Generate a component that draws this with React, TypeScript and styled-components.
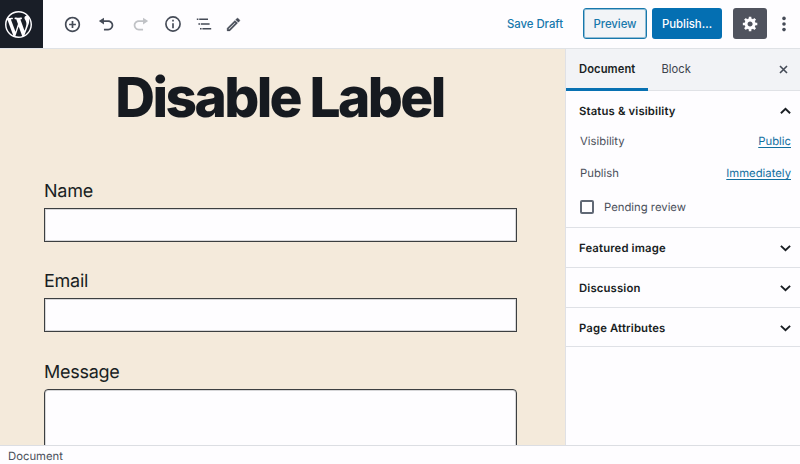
import React from 'react';
import styled, { createGlobalStyle, css } from 'styled-components';

const GlobalStyle = createGlobalStyle`
  *, *::before, *::after { box-sizing: border-box; }
  body { margin: 0; overflow: hidden; background: #fefdff; }
  button, input, textarea { font: inherit; }
`;

const Screen = styled.div`
  display: flex;
  flex-direction: column;
  width: 800px;
  height: 464px;
  overflow: hidden;
  background: #fefdff;
  color: #191e23;
  font-family: Inter, 'Liberation Sans', sans-serif;
  font-size: 11.3px;
  letter-spacing: 0;
  text-rendering: geometricPrecision;
`;

const Header = styled.header`
  display: flex;
  flex: none;
  height: 49px;
  border-bottom: 1px solid #dfe2e6;
`;

const LogoLink = styled.div`
  flex: none;
  width: 43px;
  height: 48px;
  padding: 10.5px 0 0 5px;
  background: #191e27;
  color: #fefdff;
`;

const Icon = styled.svg<{ $size: number }>`
  display: block;
  flex: none;
  width: ${({ $size }) => $size}px;
  height: ${({ $size }) => $size}px;
  fill: currentColor;
`;

const Tools = styled.div`
  display: flex;
  flex: 1;
  align-items: center;
  padding-left: 12px;
`;

const ToolButton = styled.button<{ $disabled?: boolean; $width?: number }>`
  display: flex;
  align-items: center;
  justify-content: center;
  width: ${({ $width = 34 }) => $width}px;
  height: 34px;
  padding: 0;
  border: 0;
  background: none;
  color: ${({ $disabled }) => ($disabled ? '#c0c2c6' : '#454b57')};
`;

const Actions = styled.div`
  display: flex;
  align-items: flex-start;
  padding-top: 8px;
`;

const ActionButton = styled.button<{ $kind: 'link' | 'outline' | 'primary' | 'dark'; $width: number }>`
  display: flex;
  align-items: center;
  justify-content: center;
  width: ${({ $width }) => $width}px;
  height: 31px;
  padding: 0;
  border: 0;
  border-radius: 3px;
  font-size: 11.4px;
  font-weight: 500;
  letter-spacing: -0.05px;
  white-space: nowrap;
  ${({ $kind }) => $kind === 'link' && css`background: none; color: #1778ac;`}
  ${({ $kind }) => $kind === 'outline' && css`
    background: #f2f4f7;
    color: #1778ac;
    border: 1px solid #1778ac;
    box-shadow: inset 0 0 0 1px #1778ac70;
  `}
  ${({ $kind }) => $kind === 'primary' && css`background: #046fb2; color: #fefdff;`}
  ${({ $kind }) => $kind === 'dark' && css`background: #50535e; color: #fefdff;`}
`;

const Workspace = styled.div`
  display: flex;
  flex: 1;
  min-height: 0;
`;

const Canvas = styled.main`
  flex: 1;
  overflow: hidden;
  padding: 16px 50px 0 44px;
  background: #f4eadb;
`;

const Title = styled.h1`
  margin: 0 0 51px;
  height: 66px;
  line-height: 66px;
  color: #161a20;
  font-size: 55px;
  font-weight: 800;
  letter-spacing: -2.6px;
  text-align: center;
  white-space: nowrap;
`;

const Field = styled.label`
  display: block;
  height: 90.4px;
`;

const FieldLabel = styled.span`
  display: block;
  height: 26px;
  line-height: 19px;
  font-size: 18px;
  letter-spacing: -0.27px;
`;

const TextInput = styled.input`
  display: block;
  width: 473px;
  height: 34px;
  border: 1px solid #3c3f41;
  box-shadow: inset 0 0 0 1px #3c3f4133;
  border-radius: 0;
  background: #fefdff;
  outline: none;
`;

const MessageArea = styled.textarea`
  display: block;
  width: 473px;
  height: 120px;
  border: 1px solid #3c3f41;
  box-shadow: inset 0 0 0 1px #3c3f4133;
  border-radius: 4px;
  background: #fefdff;
  resize: none;
  outline: none;
`;

const Sidebar = styled.aside`
  flex: none;
  width: 235px;
  border-left: 1px solid #e0e1e5;
  background: #fefdff;
`;

const Tabs = styled.div`
  display: flex;
  height: 42px;
  border-bottom: 1px solid #e0e2e6;
  background: #f2f3f6;
`;

const Tab = styled.button<{ $active?: boolean }>`
  padding: 0 13px;
  height: 42px;
  border: 0;
  border-bottom: 3px solid ${({ $active }) => ($active ? '#0871b2' : 'transparent')};
  background: none;
  color: ${({ $active }) => ($active ? '#191e23' : '#3d424b')};
  font-size: 11.2px;
  letter-spacing: 0.08px;
  font-weight: ${({ $active }) => ($active ? 600 : 400)};
`;

const CloseButton = styled.button`
  display: flex;
  align-items: center;
  margin-left: auto;
  padding: 0 11px 0 0;
  border: 0;
  background: none;
  color: #454b57;
`;

const Panel = styled.section<{ $height: number }>`
  height: ${({ $height }) => $height}px;
  border-bottom: 1px solid #dfe1e6;
  padding: 0 9px 0 13px;
`;

const PanelHeading = styled.h2`
  display: flex;
  align-items: center;
  justify-content: space-between;
  margin: 0;
  height: 39px;
  font-size: 11.3px;
  font-weight: 600;
  letter-spacing: 0.15px;
`;

const Row = styled.div`
  display: flex;
  align-items: center;
  justify-content: space-between;
  height: 32px;
  padding-left: 1px;
  color: #4b505b;
  &:first-of-type { margin-top: -5px; }
`;

const RowLink = styled.a`
  color: #126f9f;
  text-decoration: underline;
  text-underline-offset: 1.5px;
`;

const CheckRow = styled.label`
  display: flex;
  align-items: center;
  gap: 10px;
  height: 35px;
  padding-left: 1px;
  color: #4b505b;
`;

const CheckBox = styled.span`
  width: 14px;
  height: 14px;
  border: 2px solid #606875;
  border-radius: 2px;
`;

const Footer = styled.footer`
  flex: none;
  height: 19px;
  padding-left: 8px;
  border-top: 1px solid #dcdee3;
  color: #4b505b;
  line-height: 21px;
`;

const Spacer = styled.span<{ $width: number }>`
  flex: none;
  width: ${({ $width }) => $width}px;
`;

const MoreButton = styled.button`
  display: flex;
  align-items: center;
  justify-content: center;
  width: 33px;
  height: 31px;
  padding: 0;
  border: 0;
  background: none;
  color: #454b57;
`;

function Chevron({ up = false }: { up?: boolean }) {
  return (
    <Icon $size={12} viewBox="0 0 12 12">
      <path d={up ? 'M1.9 8.3 6.5 3.9l4.6 4.4' : 'M1.9 3.9 6.5 8.3l4.6-4.4'} fill="none" stroke="currentColor" strokeWidth="1.9" />
    </Icon>
  );
}

export default function App() {
  return (
    <>
      <GlobalStyle />
      <Screen>
        <Header>
          <LogoLink>
            <Icon $size={27} viewBox="0 0 20 20">
              <path d="M20 10c0-5.51-4.49-10-10-10C4.48 0 0 4.49 0 10c0 5.52 4.48 10 10 10 5.51 0 10-4.48 10-10zM7.78 15.37L4.37 6.22c.55-.02 1.17-.08 1.17-.08.5-.06.44-1.13-.06-1.11 0 0-1.45.11-2.37.11-.18 0-.37 0-.58-.01C4.12 2.69 6.87 1.11 10 1.11c2.33 0 4.45.87 6.05 2.34-.68-.11-1.65.39-1.65 1.58 0 .74.45 1.36.9 2.1.35.61.55 1.36.55 2.46 0 1.49-1.4 5-1.4 5l-3.03-8.37c.54-.02.82-.17.82-.17.5-.05.44-1.25-.06-1.22 0 0-1.44.12-2.38.12-.87 0-2.33-.12-2.33-.12-.5-.03-.56 1.2-.06 1.22l.92.08 1.26 3.41zM17.41 10c.24-.64.74-1.87.43-4.25.7 1.29 1.05 2.71 1.05 4.25 0 3.29-1.73 6.24-4.4 7.78.97-2.59 1.94-5.2 2.92-7.78zM6.1 18.09C3.12 16.65 1.11 13.53 1.11 10c0-1.3.23-2.48.72-3.59C3.25 10.3 4.67 14.2 6.1 18.09zm4.03-6.63l2.58 6.98c-.86.29-1.76.45-2.71.45-.79 0-1.57-.11-2.29-.33.81-2.38 1.62-4.74 2.42-7.1z" />
            </Icon>
          </LogoLink>
          <Tools>
            <ToolButton aria-label="Add block">
              <Icon $size={17} viewBox="0 0 20 20">
                <path d="M10 1c-5 0-9 4-9 9s4 9 9 9 9-4 9-9-4-9-9-9zm0 16c-3.9 0-7-3.1-7-7s3.1-7 7-7 7 3.1 7 7-3.1 7-7 7zm1-11H9v3H6v2h3v3h2v-3h3V9h-3V6z" />
              </Icon>
            </ToolButton>
            <ToolButton aria-label="Undo">
              <Icon $size={17} viewBox="0 0 20 20">
                <path d="M12 5H7V2L1 6l6 4V7h5c2.2 0 4 1.8 4 4s-1.8 4-4 4H7v2h5c3.3 0 6-2.7 6-6s-2.7-6-6-6z" />
              </Icon>
            </ToolButton>
            <ToolButton aria-label="Redo" $disabled>
              <Icon $size={17} viewBox="0 0 20 20">
                <path d="M8 5h5V2l6 4-6 4V7H8c-2.2 0-4 1.8-4 4s1.8 4 4 4h5v2H8c-3.3 0-6-2.7-6-6s2.7-6 6-6z" />
              </Icon>
            </ToolButton>
            <ToolButton aria-label="Content structure" $width={31}>
              <Icon $size={20} viewBox="0 0 24 24">
                <path d="M12 2.5a9.5 9.5 0 1 0 0 19 9.5 9.5 0 0 0 0-19zm0 17a7.5 7.5 0 1 1 0-15 7.5 7.5 0 0 1 0 15zM11 7h2v2h-2zm0 4h2v6h-2z" />
              </Icon>
            </ToolButton>
            <ToolButton aria-label="Block navigation" $width={31}>
              <Icon $size={16} viewBox="2 2 20 20">
                <path d="M5 5H3v2h2V5zm3 8h11v-2H8v2zm9-8H6v2h11V5zM7 11H5v2h2v-2zm0 8h2v-2H7v2zm3-2v2h11v-2H10z" />
              </Icon>
            </ToolButton>
            <ToolButton aria-label="Edit" $width={28}>
              <Icon $size={17} viewBox="0 0 24 24">
                <path
                  d="M14.06 9.02l.92.92L5.92 19H5v-.92l9.06-9.06M17.66 3c-.25 0-.51.1-.7.29l-1.83 1.83 3.75 3.75 1.83-1.83c.39-.39.39-1.02 0-1.41l-2.34-2.34c-.2-.2-.45-.29-.71-.29zm-3.6 3.19L3 17.25V21h3.75L17.81 9.94l-3.75-3.75z"
                  stroke="currentColor"
                  strokeWidth="0.5"
                />
              </Icon>
            </ToolButton>
          </Tools>
          <Actions>
            <ActionButton $kind="link" $width={96}>Save Draft</ActionButton>
            <ActionButton $kind="outline" $width={64}>Preview</ActionButton>
            <Spacer $width={5} />
            <ActionButton $kind="primary" $width={70}>Publish…</ActionButton>
            <Spacer $width={11} />
            <ActionButton $kind="dark" $width={34} aria-label="Settings">
              <Icon $size={17} viewBox="0 0 20 20">
                <path d="M18 12h-2.18c-.17.7-.44 1.35-.81 1.93l1.54 1.54-2.1 2.1-1.54-1.54c-.58.36-1.23.63-1.91.79V19H8v-2.18c-.68-.16-1.33-.43-1.91-.79l-1.54 1.54-2.12-2.12 1.54-1.54c-.36-.58-.63-1.23-.79-1.91H1V9.03h2.17c.16-.7.44-1.35.8-1.94L2.43 5.55l2.1-2.1 1.54 1.54c.58-.37 1.24-.64 1.93-.81V2h3v2.18c.68.16 1.33.43 1.91.79l1.54-1.54 2.12 2.12-1.54 1.54c.36.59.64 1.24.8 1.94H18V12zm-8.5 1.5c1.66 0 3-1.34 3-3s-1.34-3-3-3-3 1.34-3 3 1.34 3 3 3z" />
              </Icon>
            </ActionButton>
            <MoreButton aria-label="More">
              <Icon $size={18} viewBox="0 0 18 18">
                <circle cx="9" cy="3.4" r="1.8" />
                <circle cx="9" cy="9" r="1.8" />
                <circle cx="9" cy="14.6" r="1.8" />
              </Icon>
            </MoreButton>
          </Actions>
        </Header>
        <Workspace>
          <Canvas>
            <Title>Disable Label</Title>
            <Field>
              <FieldLabel>Name</FieldLabel>
              <TextInput />
            </Field>
            <Field>
              <FieldLabel>Email</FieldLabel>
              <TextInput />
            </Field>
            <Field>
              <FieldLabel>Message</FieldLabel>
              <MessageArea />
            </Field>
          </Canvas>
          <Sidebar>
            <Tabs>
              <Tab $active>Document</Tab>
              <Tab>Block</Tab>
              <CloseButton aria-label="Close settings">
                <Icon $size={11} viewBox="0 0 11 11">
                  <path d="m2 2 7 7m0-7-7 7" fill="none" stroke="currentColor" strokeWidth="1.6" />
                </Icon>
              </CloseButton>
            </Tabs>
            <Panel $height={137}>
              <PanelHeading>Status &amp; visibility<Chevron up /></PanelHeading>
              <Row><span>Visibility</span><RowLink>Public</RowLink></Row>
              <Row><span>Publish</span><RowLink>Immediately</RowLink></Row>
              <CheckRow><CheckBox />Pending review</CheckRow>
            </Panel>
            <Panel $height={40}><PanelHeading>Featured image<Chevron /></PanelHeading></Panel>
            <Panel $height={40}><PanelHeading>Discussion<Chevron /></PanelHeading></Panel>
            <Panel $height={39}><PanelHeading>Page Attributes<Chevron /></PanelHeading></Panel>
          </Sidebar>
        </Workspace>
        <Footer>Document</Footer>
      </Screen>
    </>
  );
}
